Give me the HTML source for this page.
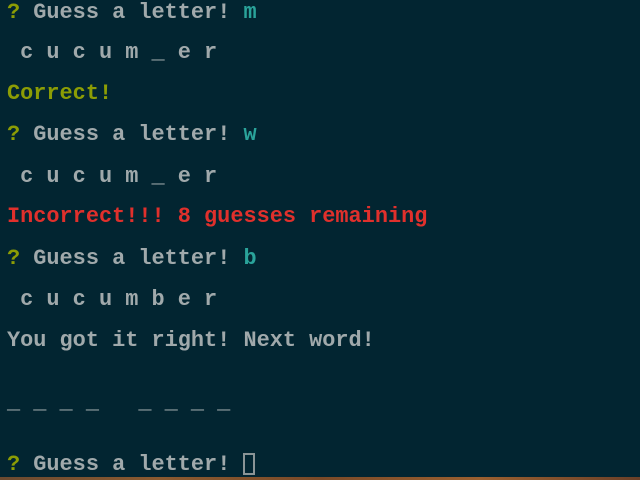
<!DOCTYPE html>
<html><head><style>
html,body{margin:0;padding:0;width:640px;height:480px;overflow:hidden;background:#022531;}
.l{position:absolute;left:7px;font-family:"Liberation Mono",monospace;font-weight:bold;font-size:21.9px;line-height:24px;color:#a0a9ab;white-space:pre;}
.y{color:#8c9d05}.c{color:#2aa39a}.r{color:#e0302c}
.cur{display:inline-block;width:12px;height:22px;border:2px solid #8a9496;box-sizing:border-box;vertical-align:-5px;}
.bot{position:absolute;left:0;top:477px;width:640px;height:3px;background:linear-gradient(90deg,#6b4a30,#8a5a30,#7a4a28,#9a6030,#6a4028);}
</style></head><body>
<div class="l" style="top:1px"><span class="y">?</span> Guess a letter! <span class="c">m</span></div>
<div class="l" style="top:41px"> c u c u m _ e r</div>
<div class="l y" style="top:82px">Correct!</div>
<div class="l" style="top:123px"><span class="y">?</span> Guess a letter! <span class="c">w</span></div>
<div class="l" style="top:165px"> c u c u m _ e r</div>
<div class="l r" style="top:205px">Incorrect!!! 8 guesses remaining</div>
<div class="l" style="top:247px"><span class="y">?</span> Guess a letter! <span class="c">b</span></div>
<div class="l" style="top:288px"> c u c u m b e r</div>
<div class="l" style="top:329px">You got it right! Next word!</div>
<div class="l" style="top:391px">_ _ _ _   _ _ _ _</div>
<div class="l" style="top:453px"><span class="y">?</span> Guess a letter! <span class="cur"></span></div>
<div class="bot"></div>
</body></html>
